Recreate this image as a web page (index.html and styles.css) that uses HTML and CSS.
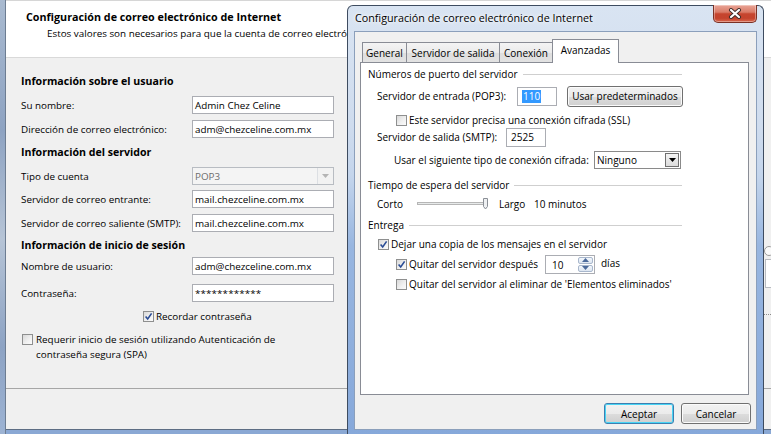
FILE: index.html
```html
<!DOCTYPE html>
<html lang="es">
<head>
<meta charset="utf-8">
<title>Configuración de correo electrónico de Internet</title>
<link rel="stylesheet" href="styles.css">
</head>
<body>
<div class="wiz">
  <div class="wiz-edge"></div>
  <div class="wiz-main">
    <header class="wiz-head">
      <h1 class="wiz-title">Configuración de correo electrónico de Internet</h1>
      <p class="wiz-sub">Estos valores son necesarios para que la cuenta de correo electrónico funcione.</p>
    </header>
    <div class="wiz-body">
      <div class="form">
        <div class="sec">Información sobre el usuario</div>
        <div class="frow mt8"><span class="flbl">Su nombre:</span><span class="tb">Admin Chez Celine</span></div>
        <div class="frow mt6"><span class="flbl">Dirección de correo electrónico:</span><span class="tb">adm@chezceline.com.mx</span></div>
        <div class="sec mt7">Información del servidor</div>
        <div class="frow mt8"><span class="flbl">Tipo de cuenta</span><span class="dd dis"><span class="dd-val">POP3</span><span class="dd-btn"><svg width="7" height="4" viewBox="0 0 7 4"><path d="M0 0H7L3.5 4Z" fill="#b4b4b4"/></svg></span></span></div>
        <div class="frow mt5"><span class="flbl">Servidor de correo entrante:</span><span class="tb">mail.chezceline.com.mx</span></div>
        <div class="frow mt6"><span class="flbl">Servidor de correo saliente (SMTP):</span><span class="tb">mail.chezceline.com.mx</span></div>
        <div class="sec mt6">Información de inicio de sesión</div>
        <div class="frow mt5"><span class="flbl">Nombre de usuario:</span><span class="tb">adm@chezceline.com.mx</span></div>
        <div class="frow mt9"><span class="flbl">Contraseña:</span><span class="tb pw">************</span></div>
        <div class="crow mt7 remember"><span class="cb"><svg width="9" height="9" viewBox="0 0 9 9"><path d="M1.6 4.4L3.7 6.9L7.6 1.4" fill="none" stroke="#2a4c95" stroke-width="1.6"/></svg></span><span class="ctext">Recordar contraseña</span></div>
        <div class="spa mt10"><span class="cb"></span><span class="spa-text">Requerir inicio de sesión utilizando Autenticación de<br>contraseña segura (SPA)</span></div>
      </div>
      <div class="side">
        <span class="s-radio"></span>
        <span class="s-box"></span>
        <span class="s-dots"></span>
      </div>
    </div>
    <div class="wiz-foot"></div>
  </div>
</div>

<div class="dlg">
  <div class="dlg-bar">
    <span class="dlg-title">Configuración de correo electrónico de Internet</span>
    <span class="dlg-close"><svg width="14" height="11" viewBox="0 0 14 11"><path d="M3 2L11 9M11 2L3 9" stroke="#3b2a28" stroke-width="4" stroke-linecap="round"/><path d="M3 2L11 9M11 2L3 9" stroke="#fff" stroke-width="2.2" stroke-linecap="round"/></svg></span>
  </div>
  <div class="dlg-client">
    <div class="tabs">
      <span class="tab t1">General</span>
      <span class="tab t2">Servidor de salida</span>
      <span class="tab t3">Conexión</span>
      <span class="tab t4 on">Avanzadas</span>
    </div>
    <div class="panel">
      <div class="grp">Números de puerto del servidor</div>
      <div class="prow h20 mt5 in9"><span class="plbl w140">Servidor de entrada (POP3):</span><span class="tb small"><span class="hl">110</span></span><span class="btn wide">Usar predeterminados</span></div>
      <div class="prow h14 mt7 in28"><span class="cb"></span><span class="ctext">Este servidor precisa una conexión cifrada (SSL)</span></div>
      <div class="prow h20 in9"><span class="plbl w129">Servidor de salida (SMTP):</span><span class="tb small">2525</span></div>
      <div class="prow h20 mt3 in26"><span class="plbl w200">Usar el siguiente tipo de conexión cifrada:</span><span class="dd en"><span class="dd-val">Ninguno</span><span class="dd-btn"><svg width="7" height="4" viewBox="0 0 7 4"><path d="M0 0H7L3.5 4Z" fill="#000"/></svg></span></span></div>
      <div class="grp mt8">Tiempo de espera del servidor</div>
      <div class="prow h14 mt5 in9"><span class="plbl w40">Corto</span><span class="slider"><svg width="72" height="12" viewBox="0 0 72 12"><rect x="0.5" y="4.5" width="68" height="2" fill="#e7eaea" stroke="#b6b6b6"/><path d="M66.5 0.5H70.5V8.5L68.5 11L66.5 8.5Z" fill="#eef0f2" stroke="#8a8f96"/></svg></span><span class="plbl w35">Largo</span><span>10 minutos</span></div>
      <div class="grp mt7">Entrega</div>
      <div class="prow h14 mt5 in10"><span class="cb"><svg width="9" height="9" viewBox="0 0 9 9"><path d="M1.6 4.4L3.7 6.9L7.6 1.4" fill="none" stroke="#2a4c95" stroke-width="1.6"/></svg></span><span class="ctext">Dejar una copia de los mensajes en el servidor</span></div>
      <div class="prow h20 mt3 in28"><span class="cb"><svg width="9" height="9" viewBox="0 0 9 9"><path d="M1.6 4.4L3.7 6.9L7.6 1.4" fill="none" stroke="#2a4c95" stroke-width="1.6"/></svg></span><span class="ctext w136">Quitar del servidor después</span><span class="spin"><span class="spin-val">10</span><span class="spin-btns"><span class="spin-b"><svg width="7" height="4" viewBox="0 0 7 4"><path d="M0 4H7L3.5 0Z" fill="#4b6a9a"/></svg></span><span class="spin-b"><svg width="7" height="4" viewBox="0 0 7 4"><path d="M0 0H7L3.5 4Z" fill="#4b6a9a"/></svg></span></span></span><span class="days">días</span></div>
      <div class="prow h14 mt3 in28"><span class="cb"></span><span class="ctext">Quitar del servidor al eliminar de 'Elementos eliminados'</span></div>
    </div>
    <div class="btns">
      <span class="btn def">Aceptar</span>
      <span class="btn">Cancelar</span>
    </div>
  </div>
</div>
</body>
</html>
```
FILE: styles.css
```css
* { box-sizing: border-box; margin: 0; padding: 0; }
html, body { width: 771px; height: 434px; overflow: hidden; }
body {
  position: relative;
  font-family: "Open Sans", "Noto Sans", sans-serif;
  font-size: 9.85px;
  color: #000;
  background: #8aa8d4;
}

/* background wizard window */
.wiz { display: flex; width: 771px; height: 434px; }
.wiz-edge {
  width: 6px;
  background: linear-gradient(180deg, #a9bad0 0%, #8ea3c2 30%, #b6c4d6 55%, #8da3c4 80%, #9db3d3 100%);
  border-right: 1px solid #6d7d92;
}
.wiz-main { flex: 1; display: flex; flex-direction: column; }
.wiz-head {
  height: 58px;
  background: #fff;
  border-top: 1px solid #d6d6d6;
  border-bottom: 1px solid #d9d9d9;
  padding: 9px 0 0 20px;
  white-space: nowrap;
  overflow: hidden;
}
.wiz-title { font-size: 10.75px; font-weight: bold; line-height: 14px; }
.wiz-sub { padding-left: 21px; line-height: 14px; margin-top: 2px; }

.wiz-body { height: 330px; background: #f0f0f0; display: flex; }
.form { width: 334px; padding: 16px 0 0 15px; }
.sec { height: 14px; display: flex; align-items: center; font-weight: bold; font-size: 10.6px; white-space: nowrap; }
.frow { height: 18px; display: flex; align-items: center; }
.flbl { width: 171px; white-space: nowrap; }
.tb {
  height: 18px;
  width: 142px;
  border: 1px solid #abadb3;
  background: #fff;
  padding-left: 2px;
  display: flex;
  align-items: center;
  white-space: nowrap;
}
.pw { letter-spacing: 0.1px; }
.crow { height: 14px; display: flex; align-items: center; }
.remember { padding-left: 122px; }
.spa { display: flex; align-items: flex-start; padding-left: 1px; }
.spa .cb { margin-top: 1px; }
.spa-text { line-height: 15px; margin-left: 3px; margin-top: -1px; }

.mt3 { margin-top: 3px; }
.mt5 { margin-top: 5px; }
.mt6 { margin-top: 6px; }
.mt7 { margin-top: 7px; }
.mt8 { margin-top: 8px; }
.mt9 { margin-top: 9px; }
.mt10 { margin-top: 10px; }

.side { margin-left: auto; width: 12px; display: flex; flex-direction: column; padding-top: 188px; }
.s-radio { width: 10px; height: 10px; border: 1px solid #9a9a9a; border-radius: 50%; margin-left: 5px; background: #fafafa; }
.s-box { width: 12px; height: 29px; border: 1px solid #b9bcc2; border-right: none; background: #fff; margin-left: 6px; margin-top: 3px; }
.s-dots { width: 12px; border-top: 1px dotted #8c8c8c; margin-top: 26px; margin-left: 4px; }

.wiz-foot {
  height: 42px;
  background: #f0f0f0;
  border-top: 1px solid #a6a6a6;
  border-bottom: 1px solid #5d6d84;
}

/* checkbox */
.cb {
  flex: none;
  width: 11px;
  height: 11px;
  border: 1px solid #8e8f8f;
  background: linear-gradient(135deg, #d9d9d9 0%, #f1f1f1 60%, #fbfbfb 100%);
  display: flex;
  align-items: center;
  justify-content: center;
}
.ctext { margin-left: 2px; white-space: nowrap; }

/* dropdowns */
.dd { height: 18px; display: flex; border: 1px solid #abadb3; background: #fff; }
.dd-val { flex: 1; padding-left: 2px; display: flex; align-items: center; }
.dd-btn { width: 16px; display: flex; align-items: center; justify-content: center; }
.dd.dis { width: 142px; background: #f4f4f4; border-color: #b8bcc2; color: #6d6d6d; }
.dd.dis .dd-btn { border-left: 1px solid #dcdfe3; background: #f2f2f2; }
.dd.en { width: 87px; border-color: #8a8a8a; }
.dd.en .dd-btn { margin: 1px; width: 14px; border: 1px solid #707070; background: linear-gradient(#f4f4f4, #dcdcdc); }

/* dialog */
.dlg {
  position: absolute;
  left: 347px;
  top: 5px;
  width: 417px;
  height: 431px;
  border: 1px solid #3e4c60;
  border-bottom: none;
  border-radius: 6px 6px 0 0;
  background: linear-gradient(180deg, #d9e4f2 0px, #cfdcee 120px, #c4d5ec 170px, #98b6e0 240px, #86a8da 100%);
  padding: 0 6px;
  display: flex;
  flex-direction: column;
  font-size: 10px;
}
.dlg-bar { height: 25px; flex: none; display: flex; align-items: flex-start; }
.dlg-title { padding-left: 1px; line-height: 25px; font-size: 10.75px; text-shadow: 0 0 6px #fff, 0 0 3px #fff; white-space: nowrap; }
.dlg-close {
  margin-left: auto;
  margin-top: -1px;
  width: 44px;
  height: 18px;
  border: 1px solid #7b3125;
  border-top: none;
  border-radius: 0 0 5px 5px;
  background: linear-gradient(180deg, #e9a597 0%, #da7b68 42%, #c6452f 52%, #c4432d 78%, #d9694f 100%);
  box-shadow: inset 0 0 0 1px rgba(255,255,255,0.35);
  display: flex;
  align-items: center;
  justify-content: center;
}
.dlg-client {
  height: 399px;
  flex: none;
  border: 1px solid #8b9fbb;
  background: #f0f0f0;
  padding: 7px 0 0 5px;
  display: flex;
  flex-direction: column;
}
.tabs { height: 23px; display: flex; align-items: flex-end; padding-left: 2px; }
.tab {
  height: 20px;
  border: 1px solid #898c95;
  border-bottom: none;
  margin-right: -1px;
  background: linear-gradient(180deg, #f4f4f4 0%, #ebebeb 50%, #dedede 51%, #e2e2e2 100%);
  display: flex;
  align-items: center;
  justify-content: center;
  white-space: nowrap;
}
.t1 { width: 45px; }
.t2 { width: 94px; }
.t3 { width: 54px; }
.t4 { width: 67px; }
.tab.on {
  position: relative;
  z-index: 1;
  height: 24px;
  margin-bottom: -1px;
  background: #fff;
  align-items: flex-start;
  padding-top: 3px;
}
.panel {
  width: 389px;
  height: 333px;
  border: 1px solid #898c95;
  background: #fff;
  padding: 4px 0 0 7px;
}
.grp { width: 314px; height: 14px; display: flex; align-items: center; white-space: nowrap; }
.grp::after { content: ""; flex: 1; height: 1px; background: #cfcfcf; margin-left: 5px; }
.prow { display: flex; align-items: center; white-space: nowrap; }
.h14 { height: 14px; }
.h20 { height: 20px; }
.in9 { padding-left: 9px; }
.in10 { padding-left: 10px; }
.in26 { padding-left: 26px; }
.in28 { padding-left: 28px; }
.plbl { flex: none; }
.w35 { width: 35px; }
.w40 { width: 40px; }
.w129 { width: 129px; }
.w136 { width: 136px; }
.w140 { width: 140px; }
.w200 { width: 200px; }
.tb.small { width: 40px; height: 19px; padding-left: 4px; }
.hl { background: #3399ff; color: #fff; padding: 0 1px; line-height: 13px; }
.slider { width: 82px; display: flex; align-items: center; }

.spin { width: 50px; height: 19px; border: 1px solid #abadb3; background: #fff; display: flex; margin-left: 0; }
.spin-val { flex: 1; padding-left: 6px; display: flex; align-items: center; padding-top: 2px; }
.spin-btns { width: 17px; display: flex; flex-direction: column; padding: 1px; gap: 1px; }
.spin-b {
  flex: 1;
  border: 1px solid #a8b7cc;
  border-radius: 2px;
  background: linear-gradient(#f3f7fc, #dde6f1);
  display: flex;
  align-items: center;
  justify-content: center;
}
.days { margin-left: 6px; margin-top: -3px; }

.btn {
  height: 21px;
  width: 70px;
  border: 1px solid #707070;
  border-radius: 3px;
  background: linear-gradient(180deg, #f2f2f2 0%, #ebebeb 50%, #dddddd 51%, #cfcfcf 100%);
  box-shadow: inset 0 0 0 1px #fbfbfb;
  display: flex;
  align-items: center;
  justify-content: center;
  white-space: nowrap;
}
.btn.wide { width: 116px; margin-left: 10px; }
.btns { margin-top: 8px; display: flex; justify-content: flex-end; gap: 7px; padding-right: 5px; }
.btn.def { border-color: #3c7fb1; box-shadow: inset 0 0 0 1px #48d4f4; }
```
